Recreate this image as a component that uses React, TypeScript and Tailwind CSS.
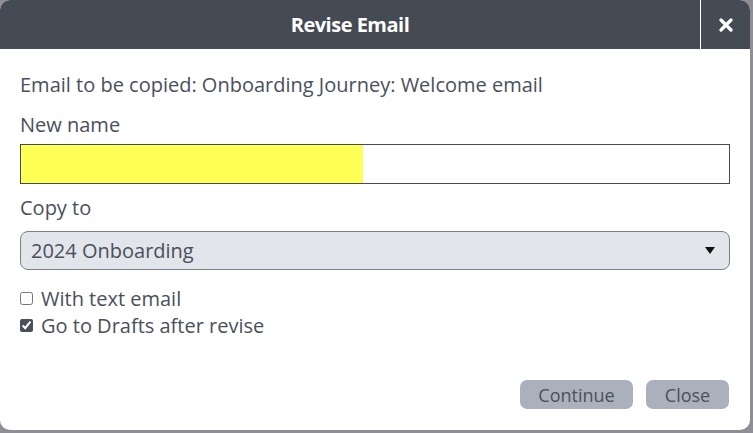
import { useState } from "react"

export default function App() {
  const [withText, setWithText] = useState(false)
  const [goDrafts, setGoDrafts] = useState(true)

  return (
    <div className="w-[753px] h-[433px] bg-[#8e8e94] font-['Open_Sans',sans-serif] text-[#4a505c]">
      <div className="w-[750px] h-[430px] bg-white rounded-[10px] overflow-hidden flex flex-col">
        {/* Header */}
        <div className="h-[49px] bg-[#444b54] flex items-center shrink-0">
          <div className="flex-1 text-center text-white font-bold text-[20px] tracking-[-0.5px]">Revise Email</div>
          <div className="w-px h-[49px] bg-white" />
          <button className="w-[49px] h-[49px] flex items-center justify-center text-white">
            <svg width="14" height="14" viewBox="0 0 14 14">
              <path d="M2 2 L12 12 M12 2 L2 12" stroke="white" strokeWidth="3.2" strokeLinecap="round" />
            </svg>
          </button>
        </div>

        {/* Body */}
        <div className="flex-1 flex flex-col px-5 pt-[22px]">
          <p className="text-[20px] leading-[28px]">Email to be copied: Onboarding Journey: Welcome email</p>
          <p className="text-[20px] leading-[28px] mt-[12px]">New name</p>
          <div className="mt-[5px] h-[40px] w-[710px] border border-[#454b54] bg-white flex">
            <div className="w-[342px] h-full bg-[#ffff55]" />
          </div>
          <p className="text-[20px] leading-[28px] mt-[10px]">Copy to</p>
          <div className="mt-[9px] h-[39px] w-[710px] rounded-[8px] border border-[#7a808a] bg-[#e2e5ea] flex items-center justify-between pl-[10px] pr-[14px]">
            <span className="text-[20px]">2024 Onboarding</span>
            <svg width="10" height="8" viewBox="0 0 10 8">
              <path d="M0 0 L10 0 L5 7 Z" fill="#111" />
            </svg>
          </div>
          <label className="mt-[15px] flex items-center gap-[8px] text-[20px] leading-[27px]">
            <input
              type="checkbox"
              checked={withText}
              onChange={(e) => setWithText(e.target.checked)}
              className="w-[13px] h-[13px] m-0 accent-[#4a4f58]"
            />
            With text email
          </label>
          <label className="flex items-center gap-[8px] text-[20px] leading-[27px]">
            <input
              type="checkbox"
              checked={goDrafts}
              onChange={(e) => setGoDrafts(e.target.checked)}
              className="w-[13px] h-[13px] m-0 accent-[#4a4f58]"
            />
            Go to Drafts after revise
          </label>

          <div className="mt-auto mb-[21px] flex justify-end gap-[13px] pr-[1px]">
            <button className="w-[113px] h-[29px] rounded-[7px] bg-[#aab1bc] text-[18px] leading-none text-[#4a505c]">Continue</button>
            <button className="w-[83px] h-[29px] rounded-[7px] bg-[#aab1bc] text-[18px] leading-none text-[#4a505c]">Close</button>
          </div>
        </div>
      </div>
    </div>
  )
}
